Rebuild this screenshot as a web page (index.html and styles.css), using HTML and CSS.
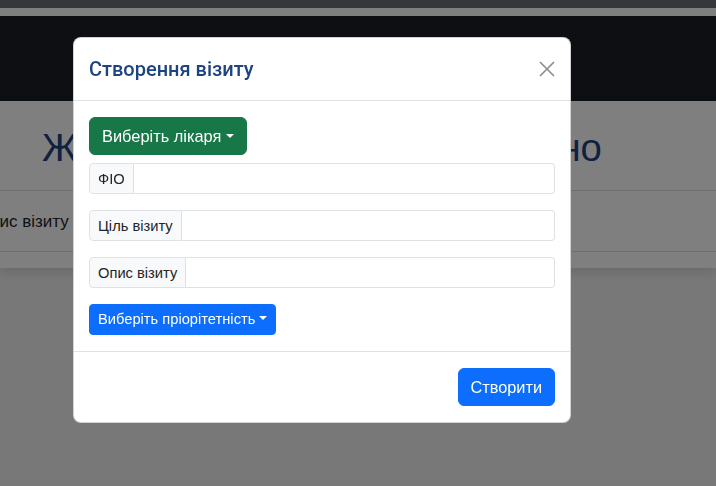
FILE: index.html
```html
<!DOCTYPE html>
<html lang="uk">
<head>
<meta charset="utf-8">
<title>Створення візиту</title>
<link rel="stylesheet" href="styles.css">
</head>
<body>
<div class="topbar"></div>
<div class="strip"></div>
<nav class="navbar"></nav>
<main class="card">
  <h1 class="page-title">Жодного візиту ще не створено</h1>
  <div class="table-head">
    <span class="th">Опис візиту</span>
    <span class="th">Лікар</span>
    <span class="th">Терміновість</span>
  </div>
</main>

<div class="backdrop"></div>
<div class="modal">
  <div class="modal-header">
    <h5 class="modal-title">Створення візиту</h5>
    <button class="btn-close" aria-label="Close">
      <svg width="16" height="16" viewBox="0 0 16 16"><path d="M1 1L15 15M15 1L1 15" stroke="#8c8c8c" stroke-width="1.6" fill="none"/></svg>
    </button>
  </div>
  <div class="modal-body">
    <button class="btn btn-success dropdown-toggle">Виберіть лікаря</button>
    <div class="input-group first">
      <span class="addon">ФІО</span>
      <input class="control" type="text">
    </div>
    <div class="input-group">
      <span class="addon">Ціль візиту</span>
      <input class="control" type="text">
    </div>
    <div class="input-group">
      <span class="addon">Опис візиту</span>
      <input class="control" type="text">
    </div>
    <button class="btn btn-primary btn-sm dropdown-toggle">Виберіть пріорітетність</button>
  </div>
  <div class="modal-footer">
    <button class="btn btn-primary btn-create">Створити</button>
  </div>
</div>
</body>
</html>
```

FILE: styles.css
```css
* { box-sizing: border-box; }
html, body { margin: 0; }
body {
  font-family: "Liberation Sans", Arial, sans-serif;
  background: #f0f0f0;
  color: #212529;
  height: 486px;
  overflow: hidden;
}
.topbar { height: 8px; background: #6c6e76; }
.strip { height: 8px; background: #fefefe; }
.navbar { height: 85px; background: #1a1f24; }
.card {
  background: #fff;
  height: 167px;
  padding-top: 23px;
  box-shadow: 0 4px 10px rgba(0,0,0,.12);
}
.page-title {
  margin: 0 0 18px;
  padding-left: 42px;
  font-size: 38.3px;
  line-height: 48px;
  font-weight: 400;
  color: #1d4380;
  white-space: nowrap;
}
.table-head {
  display: flex;
  gap: 120px;
  height: 62px;
  align-items: center;
  margin-left: -23px;
  border-top: 1px solid #dcdcdc;
  border-bottom: 1px solid #dcdcdc;
  font-size: 17px;
  padding-top: 2px;
}
.backdrop {
  position: fixed;
  inset: 0;
  background: rgba(0,0,0,.5);
}
.modal {
  position: absolute;
  left: 73px;
  top: 37px;
  width: 498px;
  background: #fff;
  border: 1px solid rgba(0,0,0,.175);
  border-radius: 8px;
}
.modal-header {
  display: flex;
  align-items: center;
  justify-content: space-between;
  padding: 16px 15px;
  border-bottom: 1px solid #dee2e6;
}
.modal-title {
  margin: 0;
  font-family: Roboto, "Liberation Sans", sans-serif;
  font-size: 20px;
  line-height: 30px;
  font-weight: 500;
  color: #1d4380;
}
.btn-close {
  border: 0;
  background: none;
  padding: 0;
  width: 16px;
  height: 16px;
  display: flex;
}
.modal-body {
  padding: 16px 15px;
  display: flex;
  flex-direction: column;
  align-items: flex-start;
}
.btn {
  font-family: inherit;
  border: 1px solid transparent;
  border-radius: 6px;
  color: #fff;
  font-size: 16.4px;
  line-height: 24px;
  padding: 6px 12px;
}
.btn-success { background: #187746; border-color: #187746; }
.btn-primary { background: #0d6efd; border-color: #0d6efd; }
.btn-sm {
  font-size: 14.7px;
  line-height: 21px;
  padding: 4px 8px;
  border-radius: 4px;
}
.dropdown-toggle::after {
  content: "";
  display: inline-block;
  margin-left: .255em;
  vertical-align: .255em;
  border-top: .3em solid;
  border-right: .3em solid transparent;
  border-left: .3em solid transparent;
}
.input-group {
  display: flex;
  width: 100%;
  height: 31px;
  margin-bottom: 16px;
}
.input-group.first { margin-top: 8px; }
.addon {
  display: flex;
  align-items: center;
  padding: 4px 8px;
  font-size: 14.7px;
  color: #212529;
  background: #f8f9fa;
  border: 1px solid #dee2e6;
  border-radius: 4px 0 0 4px;
  white-space: nowrap;
}
.control {
  flex: 1;
  min-width: 0;
  border: 1px solid #dee2e6;
  border-left: 0;
  border-radius: 0 4px 4px 0;
  font-size: 14px;
  background: #fff;
}
.modal-footer {
  display: flex;
  justify-content: flex-end;
  padding: 12px 11px;
  border-top: 1px solid #dee2e6;
}
.btn-create {
  margin: 4px;
  font-size: 16.3px;
}
```
